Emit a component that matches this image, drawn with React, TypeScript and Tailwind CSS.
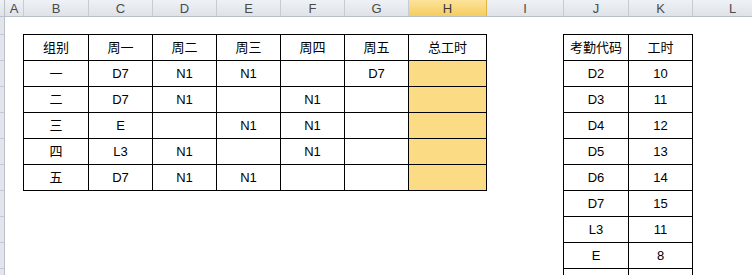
import React from 'react';

// column widths in px, A..L (the separator line is inside each width)
const cols = [
  { name: 'A', w: 19 },
  { name: 'B', w: 65 },
  { name: 'C', w: 64 },
  { name: 'D', w: 64 },
  { name: 'E', w: 64 },
  { name: 'F', w: 64 },
  { name: 'G', w: 64 },
  { name: 'H', w: 78, active: true },
  { name: 'I', w: 77 },
  { name: 'J', w: 65 },
  { name: 'K', w: 64 },
  { name: 'L', w: 80 },
];

const scheduleHead = ['组别', '周一', '周二', '周三', '周四', '周五', '总工时'];
const schedule = [
  ['一', 'D7', 'N1', 'N1', '', 'D7'],
  ['二', 'D7', 'N1', '', 'N1', ''],
  ['三', 'E', '', 'N1', 'N1', ''],
  ['四', 'L3', 'N1', '', 'N1', ''],
  ['五', 'D7', 'N1', 'N1', '', ''],
];
const scheduleWidths = [65, 64, 64, 64, 64, 64, 78];

const codes = [
  ['考勤代码', '工时'],
  ['D2', '10'],
  ['D3', '11'],
  ['D4', '12'],
  ['D5', '13'],
  ['D6', '14'],
  ['D7', '15'],
  ['L3', '11'],
  ['E', '8'],
  ['', ''],
];

const font = "font-['Liberation_Sans','Noto_Sans_CJK_SC',sans-serif]";

function Cell({ w, text, fill }: { w: number; text: string; fill?: boolean }) {
  return (
    <div
      style={{ width: w }}
      className={`h-[26px] shrink-0 border-r border-b border-black flex items-center justify-center text-[13px] text-black ${
        fill ? 'bg-[#fbdb84]' : 'bg-white'
      }`}
    >
      {text}
    </div>
  );
}

export default function App() {
  return (
    <div className={`w-[752px] h-[275px] overflow-hidden bg-white ${font}`}>
      {/* column headers */}
      <div className="flex h-[17px] border-b border-[#b9c0c9]">
        <div className="w-[5px] shrink-0 border-r border-[#b9c0c9] bg-gradient-to-b from-[#eef1f5] to-[#dfe3e8]" />
        {cols.map((c) => (
          <div
            key={c.name}
            style={{ width: c.w }}
            className={`shrink-0 border-r flex items-center justify-center text-[13px] leading-none ${
              c.active
                ? 'bg-gradient-to-b from-[#fce39a] to-[#f5cd5e] border-[#e2b33d] text-[#3a3a3a]'
                : 'bg-gradient-to-b from-[#eef1f5] to-[#dfe3e8] border-[#c6ccd4] text-[#4a4a4a]'
            }`}
          >
            {c.name}
          </div>
        ))}
      </div>

      <div className="flex">
        {/* row header strip */}
        <div className="w-[5px] shrink-0 border-r border-[#b9c0c9] bg-[#e2e6ec]">
          <div className="h-[18px] border-b border-[#c3c9d1]" />
          {Array.from({ length: 10 }).map((_, i) => (
            <div key={i} className="h-[26px] border-b border-[#c3c9d1]" />
          ))}
        </div>

        <div className="flex-1">
          <div className="h-[17px]" />
          <div className="flex items-start">
            <div className="w-[18px] shrink-0" />

            {/* shift schedule */}
            <div className="border-l border-t border-black">
              <div className="flex">
                {scheduleHead.map((t, i) => (
                  <Cell key={i} w={scheduleWidths[i]} text={t} />
                ))}
              </div>
              {schedule.map((row, r) => (
                <div key={r} className="flex">
                  {row.map((t, i) => (
                    <Cell key={i} w={scheduleWidths[i]} text={t} />
                  ))}
                  <Cell w={78} text="" fill />
                </div>
              ))}
            </div>

            <div className="w-[76px] shrink-0" />

            {/* attendance code lookup */}
            <div className="border-l border-t border-black">
              {codes.map(([code, hours], r) => (
                <div key={r} className="flex">
                  <Cell w={65} text={code} />
                  <Cell w={64} text={hours} />
                </div>
              ))}
            </div>
          </div>
        </div>
      </div>
    </div>
  );
}
